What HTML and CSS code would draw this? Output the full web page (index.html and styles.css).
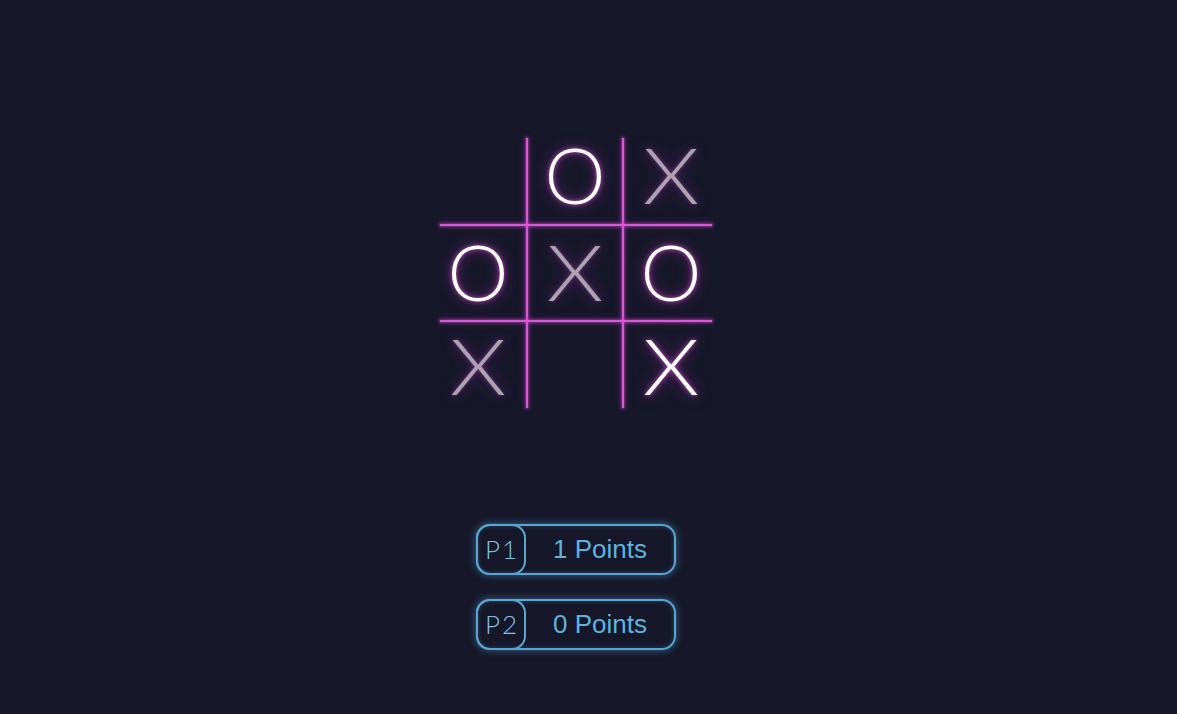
FILE: index.html
```html
<!DOCTYPE html>
<html lang="en">
<head>
<meta charset="utf-8">
<title>Neon Tic Tac Toe</title>
<link rel="stylesheet" href="styles.css">
</head>
<body>
<main class="app">
  <div class="board">
    <div class="line v v1"></div>
    <div class="line v v2"></div>
    <div class="line h h1"></div>
    <div class="line h h2"></div>

    <div class="cell r1 c1"></div>
    <div class="cell r1 c2"><span class="mark o">O</span></div>
    <div class="cell r1 c3"><span class="mark x dim">X</span></div>

    <div class="cell r2 c1"><span class="mark o">O</span></div>
    <div class="cell r2 c2"><span class="mark x dim">X</span></div>
    <div class="cell r2 c3"><span class="mark o">O</span></div>

    <div class="cell r3 c1"><span class="mark x dim">X</span></div>
    <div class="cell r3 c2"></div>
    <div class="cell r3 c3"><span class="mark x">X</span></div>
  </div>

  <div class="scores">
    <div class="score">
      <div class="tag">P1</div>
      <div class="points">1 Points</div>
    </div>
    <div class="score">
      <div class="tag">P2</div>
      <div class="points">0 Points</div>
    </div>
  </div>
</main>
</body>
</html>
```

FILE: styles.css
```css
* { box-sizing: border-box; }

html, body {
  margin: 0;
  padding: 0;
  height: 100%;
  background: #161729;
  overflow: hidden;
}

.app {
  width: calc(100% - 25px);
  display: flex;
  flex-direction: column;
  align-items: center;
  padding-top: 138px;
}

.board {
  display: grid;
  grid-template-columns: 86px 2px 94px 2px 88px;
  grid-template-rows: 86px 2px 94px 2px 86px;
}

.line {
  background: #d65cd6;
  box-shadow: 0 0 3px 1px rgba(206, 70, 206, 0.6), 0 0 9px rgba(190, 60, 190, 0.4);
}
.v { grid-row: 1 / 6; }
.h { grid-column: 1 / 6; }
.v1 { grid-column: 2; }
.v2 { grid-column: 4; }
.h1 { grid-row: 2; }
.h2 { grid-row: 4; }

.cell {
  display: flex;
  align-items: center;
  justify-content: center;
  padding-bottom: 14px;
}
.r1 { grid-row: 1; }
.r2 { grid-row: 3; padding-bottom: 4px; }
.r3 { grid-row: 5; padding-bottom: 0; }
.c1 { grid-column: 1; padding-right: 10px; }
.c2 { grid-column: 3; }
.c3 { grid-column: 5; padding-left: 6px; }

.mark {
  font-family: "Lato", "Liberation Sans", sans-serif;
  font-weight: 300;
  font-size: 77px;
  line-height: 1;
  color: #ffffff;
  text-shadow: 0 0 5px rgba(214, 80, 214, 0.9), 0 0 14px rgba(190, 60, 190, 0.55);
}
.mark.x {
  display: inline-block;
  transform: scale(1.18, 1);
}
.mark.dim {
  color: #aaa3b0;
  text-shadow: 0 0 5px rgba(200, 70, 200, 0.45), 0 0 14px rgba(170, 50, 170, 0.4);
}

.scores {
  margin-top: 116px;
  display: flex;
  flex-direction: column;
  gap: 24px;
}

.score {
  display: flex;
  width: 200px;
  height: 51px;
  border: 2px solid #5aa6d2;
  border-radius: 14px;
  box-shadow: 0 0 8px rgba(90, 170, 220, 0.55), inset 0 0 5px rgba(90, 170, 220, 0.3);
}

.tag {
  width: 50px;
  margin: -2px 0 -2px -2px;
  border: 2px solid #5aa6d2;
  border-radius: 14px;
  display: flex;
  align-items: center;
  justify-content: center;
  font-family: "Lato", "Liberation Sans", sans-serif;
  font-weight: 300;
  font-size: 26px;
  letter-spacing: 2px;
  padding-left: 2px;
  padding-bottom: 2px;
  color: #80c0ea;
}

.points {
  flex: 1;
  display: flex;
  align-items: center;
  justify-content: center;
  font-family: "Liberation Sans", Arial, sans-serif;
  font-size: 26px;
  color: #5db4e0;
}
```
